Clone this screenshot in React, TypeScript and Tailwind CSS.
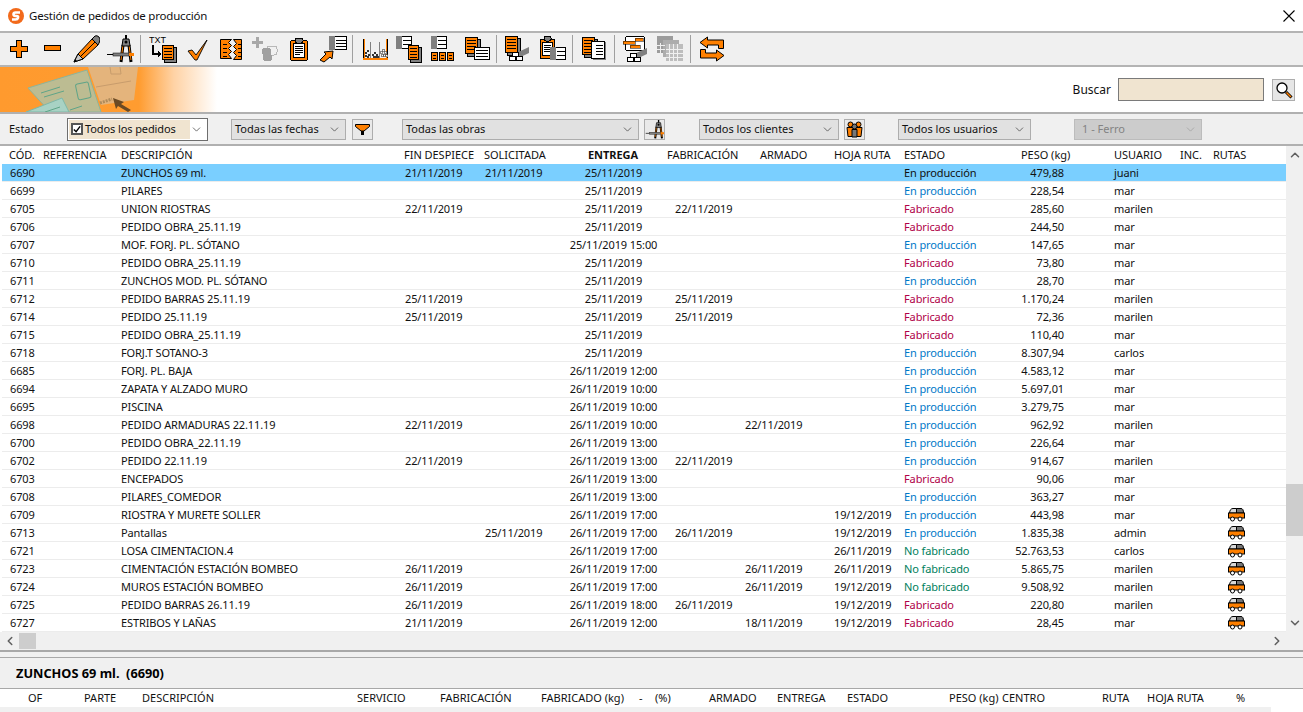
import type { ReactNode } from 'react'
import { ChevronDown, ChevronUp, ChevronLeft, ChevronRight } from 'lucide-react'

const O = '#ff8000'
const G = '#808080'
const K = '#000000'

type Row = {
  id: string
  desc: string
  fin?: string
  sol?: string
  ent: string
  fab?: string
  arm?: string
  hoja?: string
  estado: 'P' | 'F' | 'N'
  peso: string
  user: string
  ruta?: boolean
}

const rows: Row[] = [
  { id: '6690', desc: 'ZUNCHOS 69 ml.', fin: '21/11/2019', sol: '21/11/2019', ent: '25/11/2019', estado: 'P', peso: '479,88', user: 'juani' },
  { id: '6699', desc: 'PILARES', ent: '25/11/2019', estado: 'P', peso: '228,54', user: 'mar' },
  { id: '6705', desc: 'UNION RIOSTRAS', fin: '22/11/2019', ent: '25/11/2019', fab: '22/11/2019', estado: 'F', peso: '285,60', user: 'marilen' },
  { id: '6706', desc: 'PEDIDO OBRA_25.11.19', ent: '25/11/2019', estado: 'F', peso: '244,50', user: 'mar' },
  { id: '6707', desc: 'MOF. FORJ. PL. SÓTANO', ent: '25/11/2019 15:00', estado: 'P', peso: '147,65', user: 'mar' },
  { id: '6710', desc: 'PEDIDO OBRA_25.11.19', ent: '25/11/2019', estado: 'F', peso: '73,80', user: 'mar' },
  { id: '6711', desc: 'ZUNCHOS MOD. PL. SÓTANO', ent: '25/11/2019', estado: 'P', peso: '28,70', user: 'mar' },
  { id: '6712', desc: 'PEDIDO BARRAS 25.11.19', fin: '25/11/2019', ent: '25/11/2019', fab: '25/11/2019', estado: 'F', peso: '1.170,24', user: 'marilen' },
  { id: '6714', desc: 'PEDIDO 25.11.19', fin: '25/11/2019', ent: '25/11/2019', fab: '25/11/2019', estado: 'F', peso: '72,36', user: 'marilen' },
  { id: '6715', desc: 'PEDIDO OBRA_25.11.19', ent: '25/11/2019', estado: 'F', peso: '110,40', user: 'mar' },
  { id: '6718', desc: 'FORJ.T SOTANO-3', ent: '25/11/2019', estado: 'P', peso: '8.307,94', user: 'carlos' },
  { id: '6685', desc: 'FORJ. PL. BAJA', ent: '26/11/2019 12:00', estado: 'P', peso: '4.583,12', user: 'mar' },
  { id: '6694', desc: 'ZAPATA Y ALZADO MURO', ent: '26/11/2019 10:00', estado: 'P', peso: '5.697,01', user: 'mar' },
  { id: '6695', desc: 'PISCINA', ent: '26/11/2019 10:00', estado: 'P', peso: '3.279,75', user: 'mar' },
  { id: '6698', desc: 'PEDIDO ARMADURAS 22.11.19', fin: '22/11/2019', ent: '26/11/2019 10:00', arm: '22/11/2019', estado: 'P', peso: '962,92', user: 'marilen' },
  { id: '6700', desc: 'PEDIDO OBRA_22.11.19', ent: '26/11/2019 13:00', estado: 'P', peso: '226,64', user: 'mar' },
  { id: '6702', desc: 'PEDIDO 22.11.19', fin: '22/11/2019', ent: '26/11/2019 13:00', fab: '22/11/2019', estado: 'P', peso: '914,67', user: 'marilen' },
  { id: '6703', desc: 'ENCEPADOS', ent: '26/11/2019 13:00', estado: 'F', peso: '90,06', user: 'mar' },
  { id: '6708', desc: 'PILARES_COMEDOR', ent: '26/11/2019 13:00', estado: 'P', peso: '363,27', user: 'mar' },
  { id: '6709', desc: 'RIOSTRA Y MURETE SOLLER', ent: '26/11/2019 17:00', hoja: '19/12/2019', estado: 'P', peso: '443,98', user: 'mar', ruta: true },
  { id: '6713', desc: 'Pantallas', sol: '25/11/2019', ent: '26/11/2019 17:00', fab: '26/11/2019', hoja: '19/12/2019', estado: 'P', peso: '1.835,38', user: 'admin', ruta: true },
  { id: '6721', desc: 'LOSA CIMENTACION.4', ent: '26/11/2019 17:00', hoja: '26/11/2019', estado: 'N', peso: '52.763,53', user: 'carlos', ruta: true },
  { id: '6723', desc: 'CIMENTACIÓN ESTACIÓN BOMBEO', fin: '26/11/2019', ent: '26/11/2019 17:00', arm: '26/11/2019', hoja: '26/11/2019', estado: 'N', peso: '5.865,75', user: 'marilen', ruta: true },
  { id: '6724', desc: 'MUROS ESTACIÓN BOMBEO', fin: '26/11/2019', ent: '26/11/2019 17:00', arm: '26/11/2019', hoja: '19/12/2019', estado: 'N', peso: '9.508,92', user: 'marilen', ruta: true },
  { id: '6725', desc: 'PEDIDO BARRAS 26.11.19', fin: '26/11/2019', ent: '26/11/2019 18:00', fab: '26/11/2019', hoja: '19/12/2019', estado: 'F', peso: '220,80', user: 'marilen', ruta: true },
  { id: '6727', desc: 'ESTRIBOS Y LAÑAS', fin: '21/11/2019', ent: '26/11/2019 12:00', arm: '18/11/2019', hoja: '19/12/2019', estado: 'F', peso: '28,45', user: 'mar', ruta: true },
]

const estados = {
  P: { label: 'En producción', cls: 'text-[#0078c8]' },
  F: { label: 'Fabricado', cls: 'text-[#b00048]' },
  N: { label: 'No fabricado', cls: 'text-[#00805c]' },
}

const gridCols = 'grid grid-cols-[9px_34px_78px_283px_80px_79px_100px_82px_90px_69px_96px_114px_66px_33px_72px]'

function Ico({ children, size = 28 }: { children: ReactNode; size?: number }) {
  return (
    <svg width={size} height={size} viewBox="0 0 28 28" shapeRendering="crispEdges" className="block">
      {children}
    </svg>
  )
}

// small sheet with text lines, used by most toolbar icons
function Sheet({ x, y, w, h, fill = O, shadow = true }: { x: number; y: number; w: number; h: number; fill?: string; shadow?: boolean }) {
  const lines = []
  for (let ly = y + 3; ly < y + h - 2; ly += 3) lines.push(ly)
  return (
    <g>
      {shadow && <rect x={x + 2} y={y + 2} width={w} height={h} fill={G} stroke={K} strokeWidth="1" />}
      <rect x={x + 0.5} y={y + 0.5} width={w - 1} height={h - 1} fill={fill} stroke={K} strokeWidth="1" />
      {lines.map((ly) => (
        <rect key={ly} x={x + 2} y={ly} width={w - 4} height="1" fill={K} />
      ))}
    </g>
  )
}

function Tab({ x, y }: { x: number; y: number }) {
  return (
    <g>
      <rect x={x + 0.5} y={y + 0.5} width="15" height="12" fill="#fff" stroke={K} />
      <rect x={x} y={y} width="6" height="13" fill={G} />
      <rect x={x + 7} y={y + 4} width="8" height="1" fill={K} />
      <rect x={x + 7} y={y + 8} width="8" height="1" fill={K} />
    </g>
  )
}

function Beams({ x, y }: { x: number; y: number }) {
  return (
    <g>
      <polygon points={`${x + 5},${y + 7} ${x + 20},${y} ${x + 20},${y + 6} ${x + 5},${y + 13}`} fill={G} shapeRendering="auto" />
      <rect x={x + 0.5} y={y + 9.5} width="6" height="4" rx="1" fill="#fff" stroke={K} />
      <rect x={x + 3.5} y={y + 5.5} width="6" height="4" rx="1" fill="#fff" stroke={K} />
      <rect x={x + 7.5} y={y + 9.5} width="6" height="4" rx="1" fill="#fff" stroke={K} />
    </g>
  )
}

function Compass() {
  return (
    <g shapeRendering="auto">
      <path d="M17 10 L15 27 M23 10 L25 27" stroke={K} strokeWidth="3" />
      <path d="M17 10 L15 25 M23 10 L25 25" stroke={O} strokeWidth="1" />
      <path d="M17 4 L23 4 L24 11 L16 11 Z" fill={G} stroke={K} />
      <circle cx="20" cy="7" r="1.500" fill={K} />
      <rect x="19" y="0" width="2" height="4" fill={K} />
      <rect x="1" y="19" width="6" height="1" fill={K} />
      <rect x="7" y="18" width="16" height="3" fill={G} stroke={K} strokeWidth="0.500" />
      <rect x="23" y="18" width="5" height="3" fill={O} />
    </g>
  )
}

const pebbles = [
  [4, 17], [6, 15], [7, 19], [4, 20], [6, 21], [11, 19], [13, 17], [15, 19], [12, 21], [14, 21], [16, 21],
]
const whitePebbles = [
  [20, 17], [22, 15], [24, 17], [21, 20], [23, 20], [25, 20],
]

const icons: Record<string, ReactNode> = {
  plus: (
    <Ico>
      <path d="M12 5.500h5v6h6v5h-6v6h-5v-6h-6v-5h6z" fill={O} stroke={K} />
    </Ico>
  ),
  minus: (
    <Ico>
      <rect x="6.500" y="10.500" width="16" height="5" fill={O} stroke={K} />
    </Ico>
  ),
  pencil: (
    <Ico>
      <g shapeRendering="auto">
        <path d="M6 19 L20 4 L26 10 L11 24 L2 27 Z" fill={O} stroke={K} />
        <path d="M9 21 L23 7" stroke={K} strokeWidth="1" />
        <path d="M20 4 L23 1 Q25 0 27 2 L28 4 Q28 7 26 10 Z" fill={G} stroke={K} />
        <path d="M6 19 L11 24 L2 27 Z" fill="#c8c8c8" stroke={K} />
        <path d="M2 27 L5 26 L3 24 Z" fill={K} />
      </g>
    </Ico>
  ),
  compass: (
    <Ico>
      <Compass />
    </Ico>
  ),
  txt: (
    <Ico>
      <text x="0" y="8" fontFamily="Liberation Sans" fontSize="9" fill={K}>TXT</text>
      <path d="M3 10h2v8h4v-2l4 3-4 3v-2H3z" fill={K} />
      <Sheet x={13} y={10} w={12} h={15} />
    </Ico>
  ),
  check: (
    <Ico>
      <g shapeRendering="auto">
        <path d="M5 16 L9 15 L13 20 L24 5 L14 25 L12 25 Z" fill={O} stroke={K} strokeWidth="0.900" />
      </g>
    </Ico>
  ),
  split: (
    <Ico>
      <path d="M3.500 4.500h11l-3 3 3 3-3 3 3 3-3 3 3 4h-11z" fill={O} stroke={K} shapeRendering="auto" />
      <path d="M16.500 4.500h8v20h-8l3-4-3-3 3-3-3-3 3-3-3-4z" fill={O} stroke={K} shapeRendering="auto" />
      <path d="M6 9h4M6 13h4M6 17h4M6 21h4M21 9h3M21 13h3M21 17h3M21 21h3" stroke={K} />
    </Ico>
  ),
  addGrey: (
    <Ico>
      <path d="M5 2h3v4h4v3H8v4H5V9H1V6h4z" fill="#a8a8a8" />
      <rect x="16" y="11" width="10" height="9" rx="3" fill="none" stroke="#b8b8b8" />
      <rect x="11" y="13" width="9" height="7" rx="3" fill="#a0a0a0" />
      <rect x="12" y="19" width="9" height="7" rx="3" fill="#a0a0a0" />
    </Ico>
  ),
  clip: (
    <Ico>
      <rect x="5.500" y="5.500" width="17" height="20" rx="2" fill={O} stroke={K} />
      <rect x="8.500" y="8.500" width="11" height="14" fill="#fff" stroke={K} />
      <rect x="10" y="3" width="8" height="5" rx="2" fill={G} stroke={K} />
      <path d="M10 11h8M10 13h8M10 15h8M10 17h8M10 19h5" stroke={K} />
    </Ico>
  ),
  export: (
    <Ico>
      <rect x="10.500" y="1.500" width="17" height="13" fill="#fff" stroke={K} />
      <rect x="10" y="1" width="6" height="14" fill={G} />
      <path d="M17 5h10M17 8h10M17 11h10" stroke={K} />
      <g shapeRendering="auto">
        <path d="M1 25 L7 19 L5 17 L14 16 L13 24 L11 22 L5 27 Z" fill={O} stroke={K} />
      </g>
    </Ico>
  ),
  bins: (
    <Ico>
      <path d="M2.500 4v20h24V4" fill="none" stroke={K} strokeWidth="1" />
      <path d="M3.500 4v19M25.500 4v19" stroke={O} />
      <rect x="2" y="23" width="25" height="2" fill={O} />
      <path d="M9.500 7v16M18.500 7v16" stroke={G} />
      {pebbles.map(([x, y]) => (
        <rect key={`${x}-${y}`} x={x} y={y} width="2" height="2" fill="#333" />
      ))}
      {whitePebbles.map(([x, y]) => (
        <rect key={`${x}-${y}`} x={x - 0.500} y={y - 0.500} width="2" height="2" fill="#fff" stroke="#444" strokeWidth="0.600" />
      ))}
    </Ico>
  ),
  tabSheet: (
    <Ico>
      <Tab x={1} y={1} />
      <Sheet x={13} y={10} w={11} h={15} />
    </Ico>
  ),
  tabBoxes: (
    <Ico>
      <Tab x={2} y={1} />
      <Sheet x={2} y={17} w={7} h={9} shadow={false} />
      <Sheet x={10} y={17} w={7} h={9} shadow={false} />
      <Sheet x={18} y={17} w={7} h={9} shadow={false} />
    </Ico>
  ),
  sheetList: (
    <Ico>
      <Sheet x={2} y={2} w={13} h={17} />
      <rect x="11.500" y="12.500" width="15" height="12" fill="#fff" stroke={K} />
      <path d="M13 15h12M13 18h12M13 21h12" stroke={K} />
    </Ico>
  ),
  sheetBeams: (
    <Ico>
      <Sheet x={2} y={1} w={13} h={17} />
      <Beams x={6} y={12} />
    </Ico>
  ),
  clipTab: (
    <Ico>
      <rect x="2.500" y="4.500" width="14" height="19" rx="1" fill={O} stroke={K} />
      <rect x="4.500" y="7.500" width="10" height="13" fill="#fff" stroke={K} />
      <rect x="6" y="1" width="7" height="5" rx="2" fill={G} stroke={K} />
      <path d="M6 10h7M6 12h7M6 14h7M6 16h7" stroke={K} />
      <Tab x={12} y={12} />
    </Ico>
  ),
  sheets: (
    <Ico>
      <Sheet x={2} y={2} w={13} h={18} />
      <rect x="13" y="7" width="13" height="18" fill={G} />
      <rect x="11.500" y="6.500" width="13" height="17" fill="#fff" stroke={K} />
      <path d="M16 10h7M16 13h7M16 16h7M16 19h7" stroke={K} />
    </Ico>
  ),
  planBeams: (
    <Ico>
      <rect x="4.500" y="1.500" width="19" height="14" rx="2" fill="#fff" stroke={K} />
      <rect x="2" y="6" width="12" height="3" fill={O} stroke={K} strokeWidth="0.500" />
      <rect x="14" y="3" width="8" height="3" fill={O} stroke={K} strokeWidth="0.500" />
      <rect x="9" y="10" width="10" height="3" fill={O} stroke={K} strokeWidth="0.500" />
      <Beams x={6} y={13} />
    </Ico>
  ),
  gridsGrey: (
    <Ico>
      <rect x="1" y="1" width="16" height="17" fill="#9c9c9c" />
      <rect x="7" y="5" width="16" height="17" fill="#adadad" />
      <rect x="10" y="9" width="17" height="17" fill="#bdbdbd" />
      <path d="M13.500 9v17M17.500 9v17M21.500 9v17M10 14.500h17M10 18.500h17M10 22.500h17M4.500 8v11M1 10.500h8M1 14.500h8" stroke="#f0f0f0" />
    </Ico>
  ),
  swap: (
    <Ico>
      <path d="M2 7.500 L9.500 2 V5 H25.500 V13.500 H20.500 V10 H9.500 V13 Z" fill={O} stroke={K} shapeRendering="auto" />
      <path d="M26 20.500 L18.500 26 V23 H2.500 V14.500 H7.500 V18 H18.500 V15 Z" fill={O} stroke={K} shapeRendering="auto" />
    </Ico>
  ),
}

const Sep = ({ className }: { className: string }) => <div className={`h-[28px] w-px bg-[#a0a0a0] ${className}`} />

const Tool = ({ name }: { name: string }) => (
  <div className="flex h-[32px] w-[34px] items-center justify-center">{icons[name]}</div>
)

function Combo({ label, className, disabled }: { label: string; className: string; disabled?: boolean }) {
  return (
    <div
      className={`flex h-[21px] items-center justify-between border pl-[3px] pr-[4px] ${
        disabled ? 'border-[#bcbcbc] bg-[#cccccc] text-[#838383]' : 'border-[#adadad] bg-[#e1e1e1] text-[#111]'
      } ${className}`}
    >
      <span className={disabled ? 'pl-[4px]' : ''}>{label}</span>
      <ChevronDown size={13} strokeWidth={1.4} className={disabled ? 'text-[#a0a0a0]' : 'text-[#444]'} />
    </div>
  )
}

const SmallBtn = ({ children, className }: { children: ReactNode; className: string }) => (
  <div className={`flex h-[21px] w-[21px] items-center justify-center border border-[#adadad] bg-[#e9e9e9] ${className}`}>
    {children}
  </div>
)

function Truck() {
  return (
    <svg width="17" height="15" viewBox="0 0 17 15" className="block">
      <path d="M1.500 6 Q2 1.500 5 1.500 H8.500 V6 Z" fill="#d8d8d8" stroke="#000" />
      <path d="M8.500 1.500 H13 Q15.500 1.500 15.500 6 H8.500 Z" fill="#777" stroke="#000" />
      <rect x="0.500" y="6" width="16" height="5" fill="#ff8000" stroke="#000" />
      <circle cx="4.500" cy="12" r="2" fill="#fff" stroke="#000" />
      <circle cx="12" cy="12" r="2" fill="#fff" stroke="#000" />
    </svg>
  )
}

function Banner() {
  return (
    <svg width="217" height="45" viewBox="0 0 217 45" className="block">
      <defs>
        <linearGradient id="fade" x1="0" x2="1" y1="0" y2="0">
          <stop offset="0" stopColor="#ff9a2e" />
          <stop offset="0.64" stopColor="#ff9c30" />
          <stop offset="0.8" stopColor="#ffd2a4" />
          <stop offset="1" stopColor="#ffffff" />
        </linearGradient>
      </defs>
      <rect width="217" height="45" fill="url(#fade)" />
      <polygon points="64,0 138,0 134,33 101,38 88,0" fill="#e4b47c" />
      <path d="M110 0 l1 7 h10 l-1 -7 M96 20 L131 14" fill="none" stroke="#c89c6c" />
      <polygon points="28,21 87,3 101,45 50,45" fill="#bcbc92" stroke="#8cb49c" />
      <polygon points="26,45 62,31 69,45" fill="#a8d2c4" stroke="#7fb8a8" />
      <path d="M41 26 L60 20 M44 30 L64 24 M45 45 L60 40 M70 43 L82 39" stroke="#5fa488" fill="none" />
      <rect x="77" y="16" width="13" height="16" rx="2" fill="none" stroke="#5fa488" transform="rotate(-12 83 25)" />
      <path d="M100 36 L112 32" stroke="#b08c5c" strokeWidth="3" strokeDasharray="2 1" />
      <polygon points="113,31 124,35 121,37 131,43 128,45 118,39 116,42" fill="#6b4a24" />
    </svg>
  )
}

export default function App() {
  return (
    <div className="flex h-[712px] w-[1303px] flex-col overflow-hidden bg-white font-['Noto_Sans','Liberation_Sans',sans-serif] text-[11px] leading-[16px] text-[#111]">
      {/* title bar */}
      <div className="flex h-[31px] shrink-0 items-center pl-[8px] pr-[2px]">
        <svg width="16" height="16" viewBox="0 0 16 16" className="mr-[5px]">
          <circle cx="8" cy="8" r="8" fill="#f26a1b" />
          <path d="M12 4.500 H7.500 Q5.500 4.500 5.500 6.300 Q5.500 8 7.500 8 H8.500 Q10.500 8 10 9.800 Q9.500 11.500 7.500 11.500 H4" fill="none" stroke="#fff" strokeWidth="2.600" />
        </svg>
        <span className="text-[11.5px] tracking-[-0.2px]">Gestión de pedidos de producción</span>
        <svg width="24" height="24" viewBox="0 0 24 24" className="ml-auto">
          <path d="M6.500 6.500 L17.500 17.500 M17.500 6.500 L6.500 17.500" stroke="#000" strokeWidth="1.100" />
        </svg>
      </div>

      {/* toolbar */}
      <div className="flex h-[36px] shrink-0 items-center border-y-2 border-y-[#b4b4b4] bg-[#f0f0f0] pl-px">
        <Tool name="plus" />
        <Tool name="minus" />
        <Tool name="pencil" />
        <Tool name="compass" />
        <Sep className="ml-[3px] mr-[5px]" />
        <Tool name="txt" />
        <Tool name="check" />
        <Tool name="split" />
        <Tool name="addGrey" />
        <Tool name="clip" />
        <Tool name="export" />
        <Sep className="ml-[2px] mr-[5px]" />
        <Tool name="bins" />
        <Tool name="tabSheet" />
        <Tool name="tabBoxes" />
        <Tool name="sheetList" />
        <Sep className="ml-[2px] mr-[3px]" />
        <Tool name="sheetBeams" />
        <div className="w-px" />
        <Tool name="clipTab" />
        <Sep className="ml-[3px] mr-[4px]" />
        <Tool name="sheets" />
        <Sep className="ml-[3px] mr-[3px]" />
        <Tool name="planBeams" />
        <div className="w-px" />
        <Tool name="gridsGrey" />
        <Sep className="ml-[3px] mr-[4px]" />
        <Tool name="swap" />
      </div>

      {/* banner and search */}
      <div className="flex h-[45px] shrink-0 items-center bg-white pr-[8px]">
        <Banner />
        <span className="ml-auto mr-[7px] text-[12px]">Buscar</span>
        <div className="h-[23px] w-[146px] border border-[#7a7a7a] bg-[#f0e4d0]" />
        <div className="ml-[8px] flex h-[22px] w-[23px] items-center justify-center border border-[#adadad] bg-[#e6e6e6]">
          <svg width="18" height="18" viewBox="0 0 18 18">
            <circle cx="7" cy="7" r="5" fill="#fff" stroke="#000" strokeWidth="1.300" />
            <path d="M11 11 L16.500 16.500" stroke="#000" strokeWidth="3" />
            <path d="M11.500 11.500 L16 16" stroke="#ff8000" strokeWidth="1.500" />
          </svg>
        </div>
      </div>

      {/* filters */}
      <div className="flex h-[34px] shrink-0 items-center border-y-2 border-y-[#b0b0b0] bg-[#f0f0f0] pl-[9px] text-[#111]">
        <span className="w-[58px]">Estado</span>
        <div className="flex h-[23px] w-[141px] items-center border border-[#6e6e6e] bg-white pl-[1px] pr-[4px]">
          <div className="flex h-[19px] w-[121px] items-center bg-[#f0e4d0] pl-[2px]">
            <div className="mr-[2px] flex h-[12px] w-[12px] items-center justify-center border-2 border-[#555] bg-white">
              <svg width="9" height="9" viewBox="0 0 9 9">
                <path d="M1 4.500 L3.500 7 L8 1" fill="none" stroke="#000" strokeWidth="1.600" />
              </svg>
            </div>
            <span className="tracking-[-0.1px]">Todos los pedidos</span>
          </div>
          <ChevronDown size={13} strokeWidth={1.4} className="ml-auto text-[#444]" />
        </div>
        <Combo label="Todas las fechas" className="ml-[23px] w-[115px]" />
        <SmallBtn className="ml-[6px]">
          <svg width="15" height="13" viewBox="0 0 15 13">
            <path d="M0.500 1.500 H14.500 V3.500 L9 8 H6 L0.500 3.500 Z" fill="#ff8000" stroke="#000" />
            <rect x="6" y="8" width="3" height="4" fill="#000" />
          </svg>
        </SmallBtn>
        <Combo label="Todas las obras" className="ml-[29px] w-[237px]" />
        <SmallBtn className="ml-[5px]">
          <Ico size={19}>
            <Compass />
          </Ico>
        </SmallBtn>
        <Combo label="Todos los clientes" className="ml-[34px] w-[140px]" />
        <SmallBtn className="ml-[5px]">
          <svg width="17" height="17" viewBox="0 0 17 17">
            <circle cx="4.500" cy="3.500" r="2.500" fill="#ff8000" stroke="#000" />
            <circle cx="12.500" cy="3.500" r="2.500" fill="#ff8000" stroke="#000" />
            <path d="M1 6.500 H8 V15.500 H2 Z M9 6.500 H16 L15 15.500 H9 Z" fill="#ff8000" stroke="#000" />
            <circle cx="8.500" cy="5.500" r="2.500" fill="#777" stroke="#000" />
            <path d="M6 8.500 H11 V16 H6 Z" fill="#777" stroke="#000" />
          </svg>
        </SmallBtn>
        <Combo label="Todos los usuarios" className="ml-[33px] w-[133px]" />
        <Combo label="1 - Ferro" className="ml-[43px] w-[128px]" disabled />
      </div>

      {/* list */}
      <div className="flex min-h-0 shrink-0">
        <div className="w-[1286px]">
          <div className={`${gridCols} h-[18px] items-center whitespace-nowrap tracking-[-0.03px]`}>
            <span />
            <span>CÓD.</span>
            <span>REFERENCIA</span>
            <span>DESCRIPCIÓN</span>
            <span>FIN DESPIECE</span>
            <span>SOLICITADA</span>
            <span className="text-center font-bold">ENTREGA</span>
            <span className="pl-[4px]">FABRICACIÓN</span>
            <span className="pl-[15px]">ARMADO</span>
            <span className="-ml-px">HOJA RUTA</span>
            <span>ESTADO</span>
            <span className="pl-[21px]">PESO (kg)</span>
            <span>USUARIO</span>
            <span>INC.</span>
            <span>RUTAS</span>
          </div>
          {rows.map((r, i) => (
            <div
              key={r.id}
              className={`${gridCols} ml-[2px] h-[18px] items-center whitespace-nowrap border-b border-[#ececec] tracking-[-0.12px] ${
                i === 0 ? 'bg-[#7acfff]' : ''
              }`}
            >
              <span className="-ml-[2px]" />
              <span className="-ml-[1px]">{r.id}</span>
              <span />
              <span className="-ml-[2px]">{r.desc}</span>
              <span className="-ml-[1px]">{r.fin}</span>
              <span className="-ml-[1px]">{r.sol}</span>
              <span className="-ml-[3px] text-center">{r.ent}</span>
              <span className="pl-[10px]">{r.fab}</span>
              <span className="-ml-[2px]">{r.arm}</span>
              <span className="-ml-[3px]">{r.hoja}</span>
              <span className={`-ml-[2px] ${i === 0 ? '' : estados[r.estado].cls}`}>{estados[r.estado].label}</span>
              <span className="pr-[52px] text-right">{r.peso}</span>
              <span className="-ml-[2px]">{r.user}</span>
              <span />
              <span className="pl-[13px]">{r.ruta && <Truck />}</span>
            </div>
          ))}
        </div>
        {/* vertical scrollbar */}
        <div className="flex h-[486px] w-[17px] flex-col bg-[#f0f0f0]">
          <ChevronUp size={14} strokeWidth={2.6} className="mx-auto mt-[2px] text-[#606060]" />
          <div className="mt-[322px] h-[52px] w-full bg-[#cdcdcd]" />
          <ChevronDown size={14} strokeWidth={2.6} className="mx-auto mt-auto mb-[2px] text-[#606060]" />
        </div>
      </div>

      {/* horizontal scrollbar */}
      <div className="flex h-[18px] shrink-0 items-center bg-[#f0f0f0]">
        <ChevronLeft size={14} strokeWidth={2.6} className="ml-[3px] text-[#606060]" />
        <div className="ml-[2px] h-[16px] w-[17px] bg-[#cdcdcd]" />
        <ChevronRight size={14} strokeWidth={2.6} className="ml-auto mr-[19px] text-[#606060]" />
      </div>

      {/* detail */}
      <div className="h-[8px] shrink-0 border-t-2 border-b border-[#a8a8a8] bg-[#f0f0f0]" />
      <div className="flex h-[30px] shrink-0 items-center bg-[#f0f0f0] pl-[16px] text-[12.75px] font-bold text-black">
        ZUNCHOS 69 ml.&nbsp;&nbsp;(6690)
      </div>
      <div className="flex h-[19px] shrink-0 items-center whitespace-nowrap border-t border-[#a8a8a8] bg-white pl-[28px]">
        <span className="w-[56px]">OF</span>
        <span className="w-[58px]">PARTE</span>
        <span className="w-[215px]">DESCRIPCIÓN</span>
        <span className="w-[83px]">SERVICIO</span>
        <span className="w-[101px]">FABRICACIÓN</span>
        <span className="w-[98px]">FABRICADO (kg)</span>
        <span className="w-[16px]">-</span>
        <span className="w-[54px]">(%)</span>
        <span className="w-[68px]">ARMADO</span>
        <span className="w-[70px]">ENTREGA</span>
        <span className="w-[102px]">ESTADO</span>
        <span className="w-[53px]">PESO (kg)</span>
        <span className="w-[100px]">CENTRO</span>
        <span className="w-[45px]">RUTA</span>
        <span className="w-[89px]">HOJA RUTA</span>
        <span>%</span>
      </div>
      <div className="h-[18px] w-[1271px] shrink-0 bg-[#f0f0f0]" />
    </div>
  )
}
